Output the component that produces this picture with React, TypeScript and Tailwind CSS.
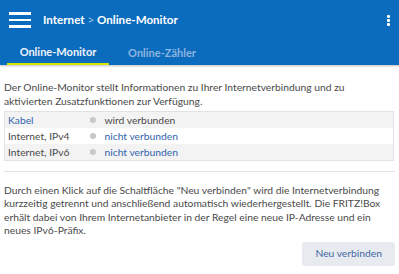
const rows = [
  { label: "Kabel", labelLink: true, status: "wird verbunden", statusLink: false },
  { label: "Internet, IPv4", labelLink: false, status: "nicht verbunden", statusLink: true },
  { label: "Internet, IPv6", labelLink: false, status: "nicht verbunden", statusLink: true },
];

export default function App() {
  return (
    <div className="h-[274px] w-[399px] overflow-hidden bg-white font-['Lato',sans-serif] text-[10.3px] text-[#4a4a4a]">
      <header className="bg-[#0b6cbd] shadow-[0_1px_2px_rgba(0,0,0,0.25)]">
        <div className="flex h-10 items-center">
          <button className="ml-[9px] flex w-[22px] flex-col gap-[4.2px]">
            <span className="block h-[2.3px] w-full bg-white" />
            <span className="block h-[2.3px] w-full bg-white" />
            <span className="block h-[2.3px] w-full bg-white" />
          </button>
          <h1 className="ml-3 text-[11.6px] font-bold text-white">
            Internet <span className="font-light">&gt;</span> Online-Monitor
          </h1>
          <button className="ml-auto mr-[9px] flex flex-col gap-[1px]">
            <span className="block h-[3px] w-[3px] rounded-[1px] bg-white" />
            <span className="block h-[3px] w-[3px] rounded-[1px] bg-white" />
            <span className="block h-[3px] w-[3px] rounded-[1px] bg-white" />
          </button>
        </div>
        <nav className="flex h-[25px] pl-[7px] text-[11px] font-bold">
          <div className="flex w-[102px] items-center justify-center border-b-2 border-[#d4e600] pt-[1px] text-[#eef3f9]">
            Online-Monitor
          </div>
          <div className="flex w-[106px] items-center justify-center pt-[1px] text-[#8db4df]">
            Online-Zähler
          </div>
        </nav>
      </header>

      <main className="px-1 pt-4">
        <p className="leading-[13.5px]">
          Der Online-Monitor stellt Informationen zu Ihrer Internetverbindung und zu aktivierten
          Zusatzfunktionen zur Verfügung.
        </p>
        <table className="mt-[3px] w-[390px] border-collapse border border-[#e2e2e2]">
          <tbody>
            {rows.map((r, i) => (
              <tr key={r.label} className={i % 2 === 0 ? "bg-[#f3f3f3]" : "bg-white"}>
                <td className="h-4 w-[84px] p-0 pl-[3px] leading-4">
                  <span className={r.labelLink ? "text-[#3264ae]" : ""}>{r.label}</span>
                </td>
                <td className="w-4 p-0 leading-4">
                  <span className="ml-[1px] block h-[6px] w-[6px] rounded-full bg-[#c9c9c9]" />
                </td>
                <td className="p-0 leading-4">
                  <span className={r.statusLink ? "text-[#3264ae]" : ""}>{r.status}</span>
                </td>
              </tr>
            ))}
          </tbody>
        </table>
        <hr className="mt-[10px] w-[391px] border-[#e4e4e4]" />
        <p className="pt-3 leading-[13.3px]">
          Durch einen Klick auf die Schaltfläche "Neu verbinden" wird die Internetverbindung
          kurzzeitig getrennt und anschließend automatisch wiederhergestellt. Die FRITZ!Box erhält
          dabei von Ihrem Internetanbieter in der Regel eine neue IP-Adresse und ein neues
          IPv6-Präfix.
        </p>
        <div className="mt-[5px] flex w-[391px] justify-end">
          <button className="h-6 rounded-[3px] bg-[#e7ebf0] px-[13px] text-[#4467a6]">Neu verbinden</button>
        </div>
      </main>
    </div>
  );
}
